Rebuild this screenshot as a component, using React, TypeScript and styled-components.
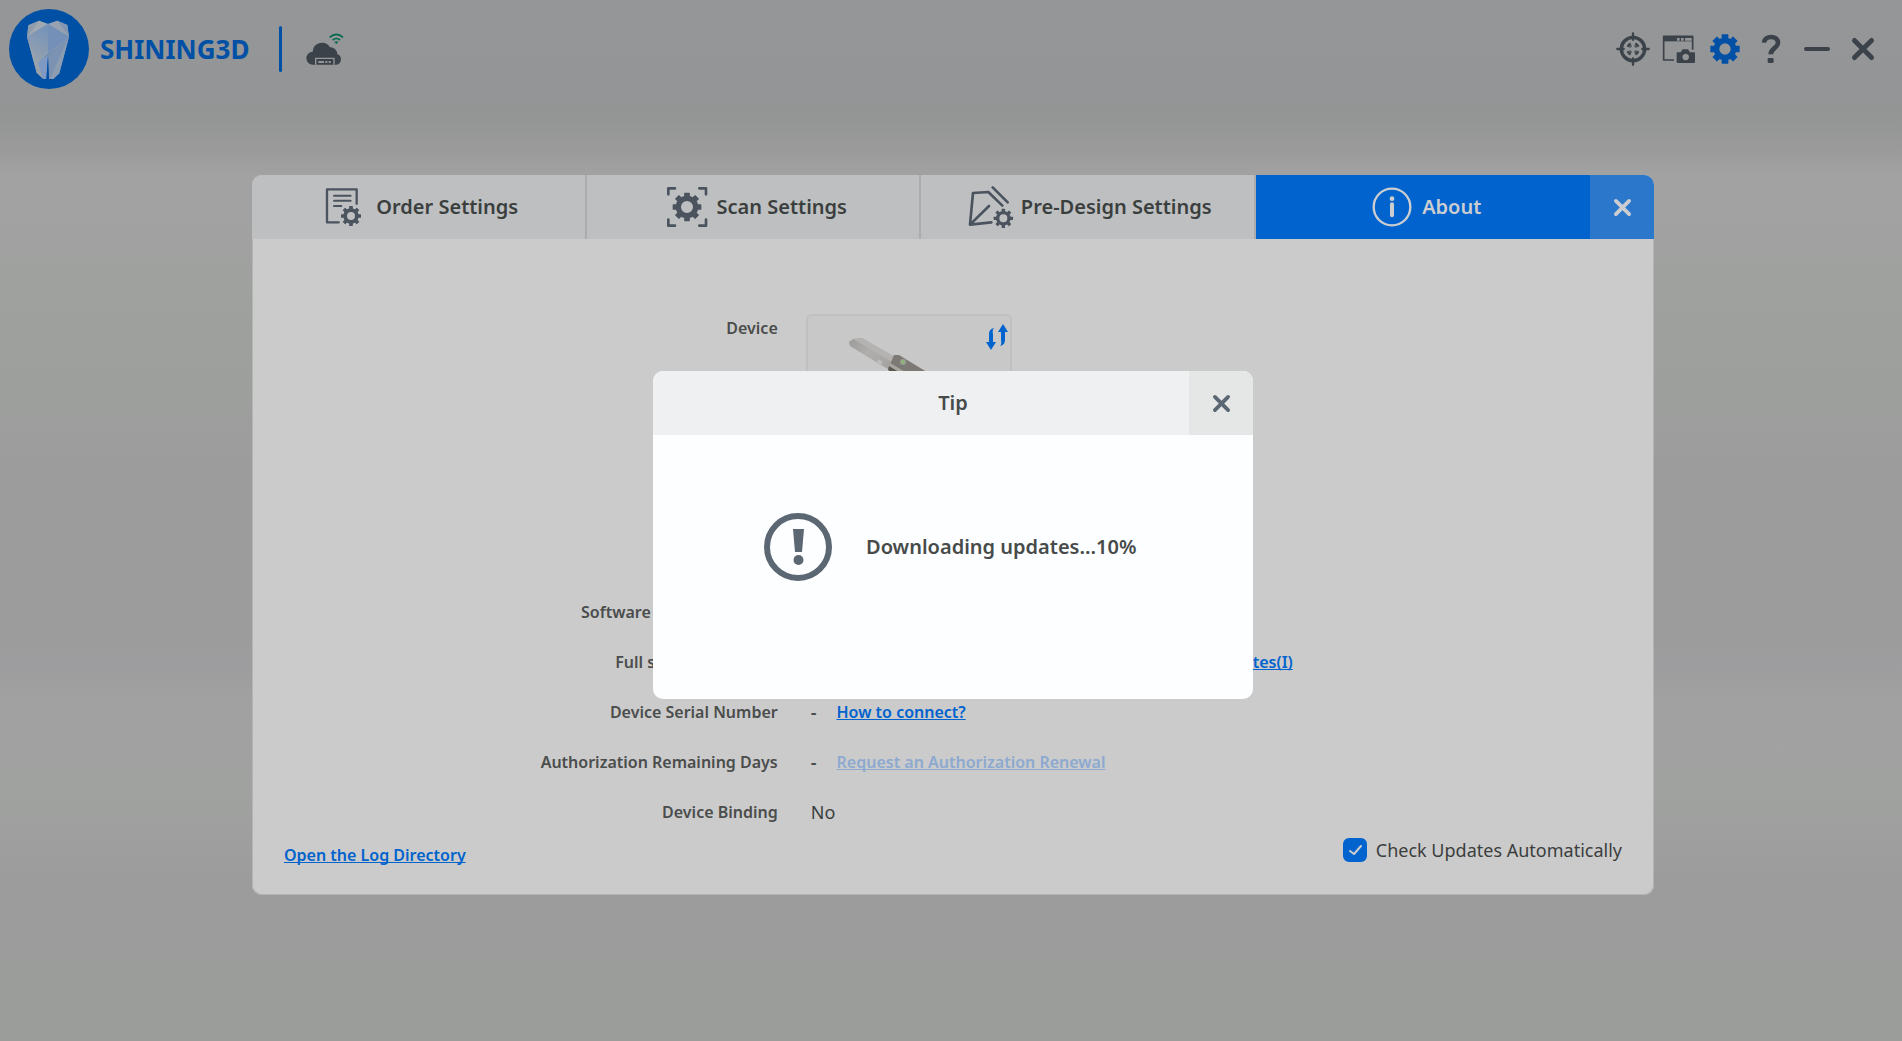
import React, { useState } from "react";
import styled, { createGlobalStyle } from "styled-components";

const colors = {
  ink: "#3b4249",
  slate: "#4b545e",
  brand: "#0050a6",
  blue: "#0063ce",
  surface: "#cbcbcb",
  tab: "#bebfc1",
  line: "#acacac",
  label: "#4a4d4c",
  text: "#3b3e3d",
};

const GlobalStyle = createGlobalStyle`
  *, *::before, *::after { box-sizing: border-box; }
  body {
    margin: 0;
    font-family: "Noto Sans", "Open Sans", sans-serif;
    color: ${colors.text};
  }
  button { font: inherit; color: inherit; border: 0; padding: 0; background: none; cursor: pointer; }
  svg { display: block; overflow: visible; }
`;

const Page = styled.div`
  min-height: 100vh;
  display: flex;
  flex-direction: column;
  background: linear-gradient(
    180deg,
    #959698 0, #939597 104px, #929593 112px, #9b9b9b 152px, #a2a2a2 176px,
    #9fa19f 280px, #9d9f9d 400px, #9c9c9c 470px, #9c9c9c 636px, #9d9d9f 664px,
    #a1a1a1 704px, #a0a2a0 790px, #9c9c9c 880px, #9a9d9a 1040px
  );
`;

const TopBar = styled.header`
  display: flex;
  align-items: center;
  height: 98px;
  padding: 0 16px 0 9px;
  color: ${colors.ink};
`;

const BrandName = styled.h1`
  margin: 0 30px 0 11px;
  font-size: 26px;
  line-height: 40px;
  font-weight: 700;
  color: ${colors.brand};
`;

const Divider = styled.span`
  width: 3px;
  height: 46px;
  margin-right: 24px;
  border-radius: 2px;
  background: ${colors.brand};
`;

const Tools = styled.nav`
  display: flex;
  margin-left: auto;
`;

const ToolButton = styled.button<{ $active?: boolean }>`
  display: grid;
  place-items: center;
  width: 46px;
  height: 46px;
  color: ${(p) => (p.$active ? colors.brand : colors.ink)};
`;

const Main = styled.main`
  display: flex;
  justify-content: center;
  padding: 77px 0 24px 4px;
`;

const Panel = styled.section`
  width: calc(100% - 48px);
  max-width: 1402px;
  border-radius: 10px;
  overflow: hidden;
  background: ${colors.surface};
  box-shadow: inset 0 0 0 1px #b4b4b4;
`;

const TabBar = styled.div`
  display: grid;
  grid-template-columns: repeat(4, 1fr) 64px;
  height: 64px;
`;

const Tab = styled.button<{ $active?: boolean }>`
  display: flex;
  align-items: center;
  justify-content: center;
  gap: 8px;
  padding-left: 6px;
  font-size: 20px;
  line-height: 28px;
  font-weight: 600;
  background: ${(p) => (p.$active ? colors.blue : colors.tab)};
  color: ${(p) => (p.$active ? "#cbcdd0" : "#3a3f3e")};
  border-right: ${(p) => (p.$active ? "0" : `2px solid ${colors.line}`)};

  svg { color: ${(p) => (p.$active ? "#cbcdd0" : colors.slate)}; }
`;

const CloseButton = styled.button<{ $tone: "blue" | "light" }>`
  display: grid;
  place-items: center;
  width: 64px;
  height: 64px;
  background: ${(p) => (p.$tone === "blue" ? "#2a77cc" : "#e5e7e6")};
  color: ${(p) => (p.$tone === "blue" ? "#cbcdd0" : "#5b6773")};
`;

const Details = styled.dl`
  display: grid;
  grid-template-columns: 3fr 5fr;
  grid-template-rows: 264px;
  grid-auto-rows: 32px;
  row-gap: 18px;
  margin: 0;
  padding-top: 75px;
`;

const Term = styled.dt`
  justify-self: end;
  padding-left: 24px;
  font-size: 16px;
  line-height: 32px;
  font-weight: 600;
  color: ${colors.label};
  white-space: nowrap;
`;

const DeviceTerm = styled(Term)`
  line-height: 28px;
`;

const Value = styled.dd`
  display: flex;
  align-items: center;
  gap: 20px;
  margin: 0;
  padding-left: 33px;
  font-size: 18px;
  line-height: 32px;
  white-space: nowrap;
`;

const Dash = styled.span`
  font-weight: 600;
  color: ${colors.label};
`;

const CardCell = styled.dd`
  margin: 0;
  padding-left: 28px;
`;

const VersionValue = styled(Value)`
  justify-content: space-between;
  width: 515px;
`;

const DeviceCard = styled.div`
  position: relative;
  width: 206px;
  height: 206px;
  border: 2px solid #c0c0c0;
  border-radius: 6px;
  background: #c8c8c8;
  overflow: hidden;
`;

const SwapButton = styled.button`
  position: absolute;
  top: 8px;
  right: 2px;
  color: ${colors.blue};
`;

const TextLink = styled.a<{ $disabled?: boolean }>`
  font-size: 16px;
  line-height: 20px;
  font-weight: 600;
  color: ${(p) => (p.$disabled ? "#8ca9d0" : colors.blue)};
  text-decoration: underline;
  text-decoration-thickness: 1px;
  text-underline-offset: 1px;
  text-decoration-skip-ink: none;
`;

const Footer = styled.footer`
  display: flex;
  align-items: flex-end;
  justify-content: space-between;
  padding: 7px 32px 30px;
`;

const CheckLabel = styled.label`
  display: flex;
  align-items: center;
  gap: 9px;
  font-size: 18px;
  line-height: 30px;
  cursor: pointer;
`;

const CheckBox = styled.span`
  display: grid;
  width: 24px;
  height: 24px;

  > * { grid-area: 1 / 1; }
  svg { pointer-events: none; color: #cbcdd0; }
`;

const CheckInput = styled.input`
  appearance: none;
  width: 24px;
  height: 24px;
  margin: 0;
  border-radius: 6px;
  border: 2px solid ${colors.blue};
  cursor: pointer;

  &:checked { background: ${colors.blue}; }
  &:not(:checked) + svg { visibility: hidden; }
`;

const Overlay = styled.div`
  position: fixed;
  inset: 0;
  display: grid;
  place-items: center;
  padding: 29px 0 0 4px;
`;

const Dialog = styled.div`
  width: 600px;
  max-width: 100%;
  border-radius: 10px;
  overflow: hidden;
  background: #fdfeff;
`;

const DialogHeader = styled.div`
  display: grid;
  grid-template-columns: 64px 1fr 64px;
  align-items: center;
  background: #eff0f2;
`;

const DialogTitle = styled.h2`
  grid-column: 2;
  margin: 0;
  font-size: 20px;
  line-height: 28px;
  font-weight: 600;
  text-align: center;
  color: #474b4a;
`;

const DialogBody = styled.div`
  display: flex;
  align-items: center;
  justify-content: center;
  gap: 34px;
  height: 264px;
  padding-bottom: 40px;
  font-size: 20px;
  line-height: 28px;
  font-weight: 600;
  color: #474b4a;
`;

const Message = styled.p`
  margin: 0;
  min-width: 276px;
`;

type GearProps = { cx: number; cy: number; outer: number; body: number; hole: number; tooth: number };

function Gear({ cx, cy, outer, body, hole, tooth }: GearProps) {
  return (
    <g transform={`translate(${cx} ${cy})`}>
      <circle r={(body + hole) / 2} fill="none" stroke="currentColor" strokeWidth={body - hole} />
      {[0, 45, 90, 135, 180, 225, 270, 315].map((angle) => (
        <rect
          key={angle}
          x={-tooth / 2}
          y={-outer}
          width={tooth}
          height={outer - body + 4}
          rx={1.5}
          fill="currentColor"
          transform={`rotate(${angle})`}
        />
      ))}
    </g>
  );
}

function ToothLogo() {
  return (
    <svg width="80" height="80" viewBox="27 27 240 240" aria-hidden="true">
      <defs>
        <linearGradient id="tooth" x1="0" y1="0" x2="0.7" y2="1">
          <stop offset="0" stopColor="#6f8fb9" />
          <stop offset="0.55" stopColor="#8b9bb0" />
          <stop offset="1" stopColor="#6d8dba" />
        </linearGradient>
        <linearGradient id="facet" x1="0.6" y1="0" x2="0.3" y2="1">
          <stop offset="0" stopColor="#7693b9" />
          <stop offset="1" stopColor="#98a2ad" />
        </linearGradient>
      </defs>
      <circle cx="147" cy="147" r="120" fill={colors.brand} />
      <path d="M85 76 117 62 144 72 172 62 202 75 207 110 178 220 160 237H147L144 165 139 237H130L110 218 81 110Z" fill="url(#tooth)" />
      <path d="M85 76 117 62 81 110Z" fill="#8e9cab" />
      <path d="M117 62 144 72 81 110Z" fill="#a0a8b0" />
      <path d="M202 75 172 62 207 110Z" fill="#8496b1" />
      <path d="M172 62 144 72 207 110Z" fill="#97a3b0" />
      <path d="M81 110 114 188 130 237 110 218Z" fill="#98a2ac" />
      <path d="M81 110 144 72V165L114 188Z" fill="url(#facet)" />
      <path d="M144 72 207 110 144 158Z" fill="#7490b8" />
      <path d="M207 118 114 188 144 162Z" fill="#64809f" />
      <path d="M207 110 188 150 150 237H147L144 165Z" fill="#7b92b2" />
      <path d="M207 110 178 220 160 237H150L188 150Z" fill="#8c9db1" />
      <path d="M144 165 114 188 130 237H139Z" fill="#7d99c4" />
      <path d="M144 165 139 237H147Z" fill={colors.brand} />
    </svg>
  );
}

function CloudDevice() {
  return (
    <svg width="38" height="34" viewBox="920 94 114 102" aria-hidden="true">
      <path d="M941 192a19 19 0 0 1-1-39 28 28 0 0 1 52-13 21 21 0 0 1 22 21 16 16 0 0 1-3 31Z" fill={colors.ink} />
      <path d="M949 192V173H1004V192" fill="none" stroke="#959698" strokeWidth="4" />
      <path d="M957 184H974M978 184H984M988 184H994" stroke="#959698" strokeWidth="6" />
      <path d="M991 110Q1011 92 1031 110M1000 118Q1011 109 1022 118" fill="none" stroke="#00694f" strokeWidth="5" />
      <path d="M1005 124Q1011 120 1017 124L1011 130Z" fill="#00694f" />
    </svg>
  );
}

function TargetIcon() {
  return (
    <svg width="34" height="34" viewBox="-51 -51 102 102" fill="none" stroke="currentColor" aria-hidden="true">
      <circle r="35" strokeWidth="10" />
      <path d="M0-47V-28M0 47V28M-47 0H-28M47 0H28" strokeWidth="7" strokeLinecap="round" />
      <path d="M-16-7A18 18 0 0 1-7-16M7-16A18 18 0 0 1 16-7M16 7A18 18 0 0 1 7 16M-7 16A18 18 0 0 1-16 7" strokeWidth="7" />
      <path d="M-12-6H-6V-12M12-6H6V-12M-12 6H-6V12M12 6H6V12" strokeWidth="3" />
    </svg>
  );
}

function CaptureIcon() {
  return (
    <svg width="34" height="34" viewBox="246 99 102 102" aria-hidden="true">
      <path d="M282 183H251V112H338V152" fill="none" stroke="currentColor" strokeWidth="5" strokeLinejoin="round" />
      <path d="M251 112H338V127H251Z" fill="currentColor" />
      <path d="M291 121H299M303 121H311M315 121H335" stroke="#959698" strokeWidth="8" />
      <path
        d="M292 160H302L308 151H324L330 160H342Q345 160 345 163V189Q345 192 342 192H293Q290 192 290 189V163Q290 160 292 160ZM317 164a10 10 0 1 0 .1 0Z"
        fill="currentColor"
        fillRule="evenodd"
      />
    </svg>
  );
}

function GearIcon() {
  return (
    <svg width="30" height="30" viewBox="-45 -45 90 90" aria-hidden="true">
      <Gear cx={0} cy={0} outer={44} body={34} hole={17} tooth={20} />
    </svg>
  );
}

function HelpIcon() {
  return (
    <svg width="20" height="30" viewBox="543 102 60 90" aria-hidden="true">
      <path d="M552 128C553 106 594 105 594 128C594 144 572 145 572 163" fill="none" stroke="currentColor" strokeWidth="14" />
      <rect x="563" y="174" width="18" height="15" rx="4" fill="currentColor" />
    </svg>
  );
}

function MinimizeIcon() {
  return (
    <svg width="26" height="6" viewBox="0 0 26 6" aria-hidden="true">
      <path d="M2 3H24" stroke="currentColor" strokeWidth="4" strokeLinecap="round" />
    </svg>
  );
}

function CrossIcon({ size }: { size: number }) {
  return (
    <svg width={size} height={size} viewBox="0 0 18 18" aria-hidden="true">
      <path d="M2 2 16 16M16 2 2 16" stroke="currentColor" strokeWidth="4" strokeLinecap="round" />
    </svg>
  );
}

function OrderIcon() {
  return (
    <svg width="44" height="44" viewBox="256 75 132 132" aria-hidden="true">
      <path d="M354 131V88H265V187H300" fill="none" stroke="currentColor" strokeWidth="7" strokeLinecap="round" strokeLinejoin="round" />
      <path d="M286 107H336M286 122H336M286 138H308" stroke="currentColor" strokeWidth="6" strokeLinecap="round" />
      <Gear cx={337} cy={168} outer={30} body={23} hole={12} tooth={11} />
    </svg>
  );
}

function ScanIcon() {
  return (
    <svg width="44" height="44" viewBox="1264 75 132 132" aria-hidden="true">
      <path
        d="M1274 103V85H1294M1367 85H1387V103M1387 179V197H1367M1294 197H1274V179"
        fill="none"
        stroke="currentColor"
        strokeWidth="8"
        strokeLinecap="round"
        strokeLinejoin="round"
      />
      <Gear cx={1330} cy={141} outer={43} body={34} hole={18} tooth={17} />
    </svg>
  );
}

function DesignIcon() {
  return (
    <svg width="44" height="44" viewBox="671 75 132 132" aria-hidden="true">
      <path
        d="M771 137 729 96 683 99 674 194 738 187M674 194 731 138M742 82 787 127"
        fill="none"
        stroke="currentColor"
        strokeWidth="8"
        strokeLinecap="round"
        strokeLinejoin="round"
      />
      <Gear cx={774} cy={175} outer={29} body={22} hole={12} tooth={10} />
    </svg>
  );
}

function InfoIcon() {
  return (
    <svg width="44" height="44" viewBox="-66 -66 132 132" aria-hidden="true">
      <circle r="55" fill="none" stroke="currentColor" strokeWidth="7" />
      <circle cy="-25" r="7" fill="currentColor" />
      <path d="M0-8V25" stroke="currentColor" strokeWidth="12" strokeLinecap="round" />
    </svg>
  );
}

function SwapIcon() {
  return (
    <svg width="22" height="26" viewBox="0 0 22 26" fill="currentColor" aria-hidden="true">
      <path d="M8 4Q3 5 3 10V18H0L5 26 10 18H7V10Q6 6 8 4Z" />
      <path d="M14 22Q19 21 19 16V8H22L17 0 12 8H15V16Q16 20 14 22Z" />
    </svg>
  );
}

function ScannerPicture() {
  return (
    <svg width="202" height="202" viewBox="2 2 202 202" role="img" aria-label="Intraoral scanner">
      <defs>
        <linearGradient id="wand" x1="0" y1="0" x2="1" y2="0.6">
          <stop offset="0" stopColor="#9b9a98" />
          <stop offset="0.5" stopColor="#afaeac" />
          <stop offset="1" stopColor="#a5a4a2" />
        </linearGradient>
      </defs>
      <path d="M43 28 47 25 56 24 89 43 82 55 75 51 44 32Z" fill="url(#wand)" />
      <path d="M56 24 89 43 86 48 47 25Z" fill="#b4b3b1" />
      <path d="M72 45 77 48 75 51 71 48Z" fill="#bdbdbc" />
      <path d="M88 41 93 41 170 88 158 104 82 55Z" fill="#7d7a75" />
      <path d="M84 49 164 96 158 104 82 55Z" fill="#a8a5a0" />
      <path d="M83 52 161 100 158 104 82 56Z" fill="#5a5651" />
      <circle cx="97" cy="48" r="3" fill="#9aa092" />
      <circle cx="97" cy="48" r="1.5" fill="#86bd6b" />
    </svg>
  );
}

function AlertIcon() {
  return (
    <svg width="68" height="68" viewBox="0 0 68 68" aria-hidden="true">
      <circle cx="34" cy="34" r="31" fill="none" stroke="#5b6773" strokeWidth="6" />
      <path d="M29 16H40L38 39H31Z" fill="#5b6773" />
      <circle cx="34.5" cy="47" r="5" fill="#5b6773" />
    </svg>
  );
}

function CheckIcon() {
  return (
    <svg width="24" height="24" viewBox="0 0 24 24" fill="none" aria-hidden="true">
      <path d="M7 13 11 16 18 8" stroke="currentColor" strokeWidth="2" strokeLinecap="round" strokeLinejoin="round" />
    </svg>
  );
}

const tabs = [
  { id: "order", label: "Order Settings", Icon: OrderIcon },
  { id: "scan", label: "Scan Settings", Icon: ScanIcon },
  { id: "design", label: "Pre-Design Settings", Icon: DesignIcon },
  { id: "about", label: "About", Icon: InfoIcon },
];

const tools = [
  { label: "Calibration", icon: <TargetIcon /> },
  { label: "Screenshot", icon: <CaptureIcon /> },
  { label: "Settings", icon: <GearIcon />, active: true },
  { label: "Help", icon: <HelpIcon /> },
  { label: "Minimize", icon: <MinimizeIcon /> },
  { label: "Close", icon: <CrossIcon size={22} /> },
];

export default function App() {
  const [autoCheck, setAutoCheck] = useState(true);
  const progress = 10;

  return (
    <>
      <GlobalStyle />
      <Page>
        <TopBar>
          <ToothLogo />
          <BrandName>SHINING3D</BrandName>
          <Divider />
          <CloudDevice />
          <Tools>
            {tools.map((tool) => (
              <ToolButton key={tool.label} aria-label={tool.label} $active={tool.active}>
                {tool.icon}
              </ToolButton>
            ))}
          </Tools>
        </TopBar>

        <Main>
          <Panel>
            <TabBar role="tablist">
              {tabs.map(({ id, label, Icon }) => (
                <Tab key={id} role="tab" aria-selected={id === "about"} $active={id === "about"}>
                  <Icon />
                  {label}
                </Tab>
              ))}
              <CloseButton $tone="blue" aria-label="Close settings">
                <CrossIcon size={17} />
              </CloseButton>
            </TabBar>

            <Details>
              <DeviceTerm>Device</DeviceTerm>
              <CardCell>
                <DeviceCard>
                  <ScannerPicture />
                  <SwapButton aria-label="Switch device">
                    <SwapIcon />
                  </SwapButton>
                </DeviceCard>
              </CardCell>

              <Term>Software Current Version</Term>
              <Value>
                <Dash>-</Dash>
              </Value>

              <Term>Full software version</Term>
              <VersionValue>
                <Dash>-</Dash>
                <TextLink href="#updates">Check for Updates(I)</TextLink>
              </VersionValue>

              <Term>Device Serial Number</Term>
              <Value>
                <Dash>-</Dash>
                <TextLink href="#connect">How to connect?</TextLink>
              </Value>

              <Term>Authorization Remaining Days</Term>
              <Value>
                <Dash>-</Dash>
                <TextLink href="#renewal" aria-disabled="true" $disabled>
                  Request an Authorization Renewal
                </TextLink>
              </Value>

              <Term>Device Binding</Term>
              <Value>No</Value>
            </Details>

            <Footer>
              <TextLink href="#logs">Open the Log Directory</TextLink>
              <CheckLabel htmlFor="auto-check">
                <CheckBox>
                  <CheckInput
                    id="auto-check"
                    type="checkbox"
                    checked={autoCheck}
                    onChange={(event) => setAutoCheck(event.target.checked)}
                  />
                  <CheckIcon />
                </CheckBox>
                Check Updates Automatically
              </CheckLabel>
            </Footer>
          </Panel>
        </Main>
      </Page>

      <Overlay>
        <Dialog role="dialog" aria-modal="true" aria-labelledby="tip-title">
          <DialogHeader>
            <DialogTitle id="tip-title">Tip</DialogTitle>
            <CloseButton $tone="light" aria-label="Close tip">
              <CrossIcon size={17} />
            </CloseButton>
          </DialogHeader>
          <DialogBody>
            <AlertIcon />
            <Message>Downloading updates...{progress}%</Message>
          </DialogBody>
        </Dialog>
      </Overlay>
    </>
  );
}
